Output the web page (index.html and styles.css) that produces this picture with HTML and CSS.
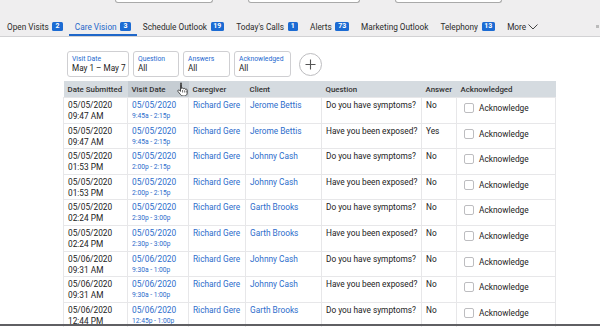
FILE: index.html
```html
<!DOCTYPE html>
<html>
<head>
<meta charset="utf-8">
<link rel="stylesheet" href="styles.css">
</head>
<body>
<div class="topbar">
  <div class="stubs">
    <span class="stub s1"></span><span class="stub s2"></span><span class="stub s3"></span>
  </div>
  <div class="tabs">
    <div class="tab">Open Visits<span class="badge">2</span></div>
    <div class="tab active">Care Vision<span class="badge">3</span></div>
    <div class="tab">Schedule Outlook<span class="badge">19</span></div>
    <div class="tab">Today's Calls<span class="badge">1</span></div>
    <div class="tab">Alerts<span class="badge">73</span></div>
    <div class="tab">Marketing Outlook</div>
    <div class="tab">Telephony<span class="badge">13</span></div>
    <div class="tab">More<svg class="chev" width="10" height="6" viewBox="0 0 10 6"><path d="M0.5 0.5 L5 5 L9.5 0.5" fill="none" stroke="#444" stroke-width="1"/></svg></div>
    <span class="dot"></span>
  </div>
</div>

<div class="filters">
  <div class="fbox w1"><div class="flabel">Visit Date</div><div class="fval">May 1 – May 7</div></div>
  <div class="fbox w2"><div class="flabel">Question</div><div class="fval">All</div></div>
  <div class="fbox w3"><div class="flabel">Answers</div><div class="fval">All</div></div>
  <div class="fbox w4"><div class="flabel">Acknowledged</div><div class="fval">All</div></div>
  <div class="addbtn"><svg width="11" height="11" viewBox="0 0 11 11"><path d="M5.5 0.5V10.5M0.5 5.5H10.5" stroke="#555" stroke-width="1.1"/></svg></div>
</div>

<table class="grid">
  <colgroup>
    <col class="c1"><col class="c2"><col class="c3"><col class="c4"><col class="c5"><col class="c6"><col class="c7">
  </colgroup>
  <thead>
    <tr>
      <th>Date Submitted</th>
      <th class="sorted">Visit Date
        <svg class="cursor" width="12" height="14" viewBox="0 0 12 14"><path d="M3.5 1.2c.6 0 1 .4 1 1v4.3c.2-.3.6-.5 1-.5.6 0 1 .4 1 .9.2-.3.5-.5.9-.5.6 0 1 .4 1 1 .2-.2.5-.3.8-.3.6 0 1 .4 1 1v3c0 1.6-1.3 2.9-2.9 2.9H6c-1 0-1.9-.5-2.4-1.3L1 9.5c-.3-.5-.2-1.1.3-1.4.4-.3 1-.2 1.3.2l.9 1.1V2.2c0-.6.4-1 1-1z" fill="#fff" stroke="#222" stroke-width=".8"/><path d="M5.5 8v2.5M7.4 8.3v2.2M9.2 8.7v1.8" stroke="#222" stroke-width=".6"/></svg>
      </th>
      <th>Caregiver</th>
      <th>Client</th>
      <th>Question</th>
      <th>Answer</th>
      <th>Acknowledged</th>
    </tr>
  </thead>
  <tbody>
    <tr><td>05/05/2020<br>09:47 AM</td><td class="link">05/05/2020<span class="sub">9:45a - 2:15p</span></td><td class="link">Richard Gere</td><td class="link">Jerome Bettis</td><td>Do you have symptoms?</td><td>No</td><td class="ack"><span class="cb"></span>Acknowledge</td></tr>
    <tr><td>05/05/2020<br>09:47 AM</td><td class="link">05/05/2020<span class="sub">9:45a - 2:15p</span></td><td class="link">Richard Gere</td><td class="link">Jerome Bettis</td><td>Have you been exposed?</td><td>Yes</td><td class="ack"><span class="cb"></span>Acknowledge</td></tr>
    <tr><td>05/05/2020<br>01:53 PM</td><td class="link">05/05/2020<span class="sub">2:00p - 2:15p</span></td><td class="link">Richard Gere</td><td class="link">Johnny Cash</td><td>Do you have symptoms?</td><td>No</td><td class="ack"><span class="cb"></span>Acknowledge</td></tr>
    <tr><td>05/05/2020<br>01:53 PM</td><td class="link">05/05/2020<span class="sub">2:00p - 2:15p</span></td><td class="link">Richard Gere</td><td class="link">Johnny Cash</td><td>Have you been exposed?</td><td>No</td><td class="ack"><span class="cb"></span>Acknowledge</td></tr>
    <tr><td>05/05/2020<br>02:24 PM</td><td class="link">05/05/2020<span class="sub">2:30p - 3:00p</span></td><td class="link">Richard Gere</td><td class="link">Garth Brooks</td><td>Do you have symptoms?</td><td>No</td><td class="ack"><span class="cb"></span>Acknowledge</td></tr>
    <tr><td>05/05/2020<br>02:24 PM</td><td class="link">05/05/2020<span class="sub">2:30p - 3:00p</span></td><td class="link">Richard Gere</td><td class="link">Garth Brooks</td><td>Have you been exposed?</td><td>No</td><td class="ack"><span class="cb"></span>Acknowledge</td></tr>
    <tr><td>05/06/2020<br>09:31 AM</td><td class="link">05/06/2020<span class="sub">9:30a - 1:00p</span></td><td class="link">Richard Gere</td><td class="link">Johnny Cash</td><td>Do you have symptoms?</td><td>No</td><td class="ack"><span class="cb"></span>Acknowledge</td></tr>
    <tr><td>05/06/2020<br>09:31 AM</td><td class="link">05/06/2020<span class="sub">9:30a - 1:00p</span></td><td class="link">Richard Gere</td><td class="link">Johnny Cash</td><td>Have you been exposed?</td><td>No</td><td class="ack"><span class="cb"></span>Acknowledge</td></tr>
    <tr><td>05/06/2020<br>12:44 PM</td><td class="link">05/06/2020<span class="sub">12:45p - 1:00p</span></td><td class="link">Richard Gere</td><td class="link">Garth Brooks</td><td>Do you have symptoms?</td><td>No</td><td class="ack"><span class="cb"></span>Acknowledge</td></tr>
  </tbody>
</table>
<div class="edge"></div>
</body>
</html>
```

FILE: styles.css
```css
html, body {
  margin: 0;
  padding: 0;
}
body {
  width: 600px;
  height: 327px;
  overflow: hidden;
  position: relative;
  background: #fff;
  font-family: Roboto, "Liberation Sans", sans-serif;
  color: #222;
}
.topbar {
  background: #efeeef;
  border-bottom: 1px solid #d2d2d4;
  height: 37px;
  box-sizing: border-box;
}
.stubs {
  display: flex;
  height: 3px;
  padding-left: 115px;
}
.stub {
  display: block;
  height: 2px;
  background: #fff;
  border: 1px solid #a9a9a9;
  border-top: none;
  border-radius: 0 0 3px 3px;
}
.s1 { width: 96px; }
.s2 { width: 110px; margin-left: 35px; }
.s3 { width: 105px; margin-left: 35px; }
.tabs {
  display: flex;
  align-items: flex-end;
  margin-top: 16px;
  padding-left: 1px;
  position: relative;
}
.tab {
  display: flex;
  align-items: center;
  padding: 0 6px;
  height: 15px;
  border-bottom: 2px solid transparent;
  font-size: 8.25px;
  color: #2b2b2b;
  white-space: nowrap;
}
.tab.active {
  color: #1f67c9;
  border-bottom-color: #1f67c9;
}
.badge {
  display: inline-block;
  margin-left: 3.5px;
  padding: 0 2.8px;
  height: 9.5px;
  line-height: 9.5px;
  min-width: 5px;
  text-align: center;
  background: #1c6bd3;
  color: #fff;
  font-size: 7px;
  font-weight: 700;
  border-radius: 1.5px;
}
.chev {
  margin-left: 2px;
}
.dot {
  position: absolute;
  left: 596px;
  top: 6px;
  width: 3px;
  height: 3px;
  background: #bbb;
}
.filters {
  display: flex;
  align-items: center;
  gap: 4px;
  margin: 14px 0 0 67px;
  height: 26px;
}
.fbox {
  box-sizing: border-box;
  height: 26px;
  border: 1px solid #cfcfd2;
  border-radius: 3px;
  background: #fff;
  padding: 3px 0 0 4px;
}
.w1 { width: 62px; }
.w2 { width: 46px; }
.w3 { width: 47px; }
.w4 { width: 57px; }
.flabel {
  font-size: 6.8px;
  line-height: 8px;
  color: #2569cf;
}
.fval {
  font-size: 8.2px;
  line-height: 11px;
  color: #222;
}
.addbtn {
  box-sizing: border-box;
  width: 23px;
  height: 23px;
  margin-left: 4px;
  border: 1px solid #bdbdc0;
  border-radius: 50%;
  display: flex;
  align-items: center;
  justify-content: center;
  background: #fff;
}
.grid {
  margin: 4px 0 0 63px;
  border-collapse: collapse;
  table-layout: fixed;
  width: 492px;
  font-size: 8.3px;
}
.c1 { width: 64px; }
.c2 { width: 61px; }
.c3 { width: 57px; }
.c4 { width: 76px; }
.c5 { width: 100px; }
.c6 { width: 35px; }
.c7 { width: 99px; }
.grid th {
  background: #d5dbe0;
  height: 16px;
  padding: 0 4px;
  text-align: left;
  font-weight: 500;
  font-size: 7.9px;
  color: #333;
  white-space: nowrap;
  position: relative;
}
.grid th.sorted {
  background: #c6cdd3;
}
.cursor {
  position: absolute;
  left: 49px;
  top: 1px;
}
.grid td {
  height: 25.6px;
  box-sizing: border-box;
  padding: 2px 4px 0;
  vertical-align: top;
  line-height: 11px;
  border: 1px solid #e7e7e9;
  white-space: nowrap;
  overflow: hidden;
}
.grid td.link {
  color: #2c6ccb;
}
.sub {
  display: block;
  font-size: 6.7px;
  line-height: 10px;
}
.grid td.ack {
  padding: 5px 0 0 7px;
}
.cb {
  display: inline-block;
  box-sizing: border-box;
  width: 10px;
  height: 10px;
  border: 1px solid #bdbdc0;
  border-radius: 2px;
  background: #fff;
  vertical-align: -2px;
  margin-right: 5px;
}
.edge {
  position: absolute;
  left: 0;
  right: 0;
  top: 324px;
  height: 2px;
  background: #5f5f63;
}
```
